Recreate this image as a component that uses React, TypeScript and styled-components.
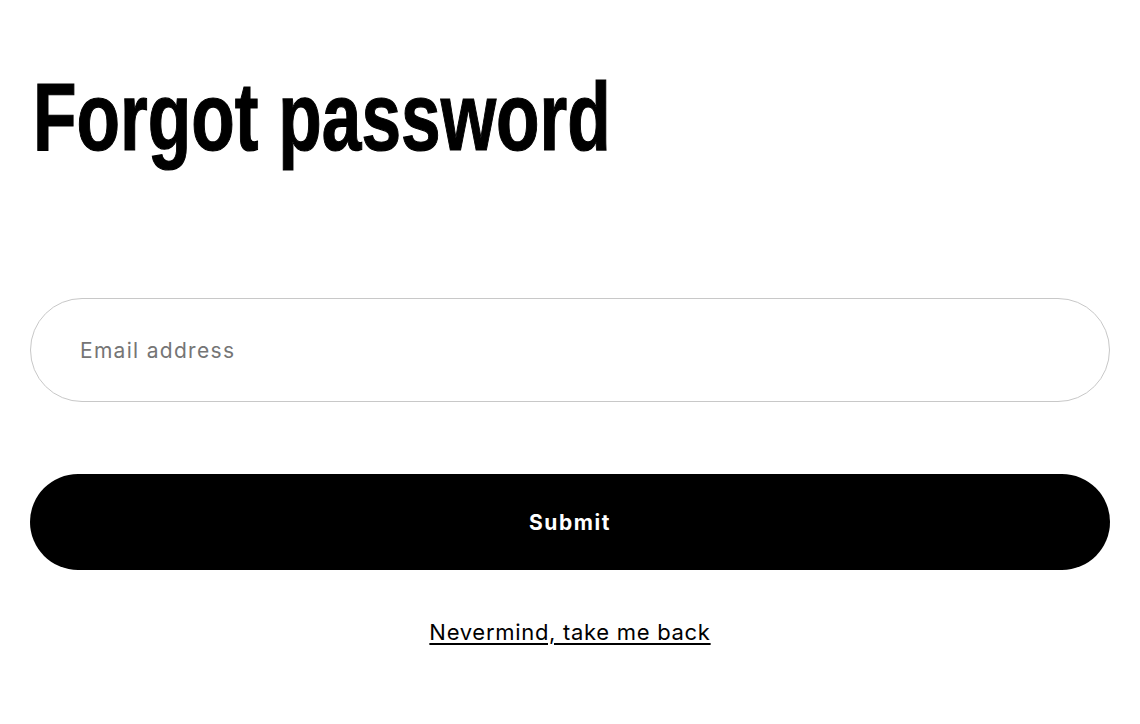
import React from "react";
import styled, { createGlobalStyle } from "styled-components";

const GlobalStyle = createGlobalStyle`
  html, body {
    margin: 0;
    padding: 0;
    background: #ffffff;
  }
  body {
    font-family: Inter, "Helvetica Neue", Arial, sans-serif;
    color: #111111;
  }
  * {
    box-sizing: border-box;
  }
`;

const Page = styled.div`
  width: 1140px;
  min-height: 724px;
  padding: 69px 30px 0 30px;
`;

const HeadingWrap = styled.div`
  height: 96px;
  overflow: visible;
  padding-left: 3px;
`;

const Heading = styled.h1`
  margin: 0;
  font-family: "Liberation Sans", Arial, sans-serif;
  font-weight: 700;
  font-size: 96px;
  line-height: 1;
  letter-spacing: 0;
  color: #000000;
  -webkit-text-stroke: 1.2px #000000;
  white-space: nowrap;
  display: inline-block;
  transform: scaleX(0.742);
  transform-origin: left top;
`;

const Form = styled.form`
  display: flex;
  flex-direction: column;
  margin-top: 133px;
`;

const EmailInput = styled.input`
  width: 100%;
  height: 104px;
  border: 1px solid #c8c8c8;
  border-radius: 52px;
  padding: 0 49px;
  font-family: Inter, "Helvetica Neue", Arial, sans-serif;
  font-size: 21px;
  letter-spacing: 1.3px;
  color: #111111;
  background: #ffffff;
  outline: none;

  &::placeholder {
    color: #757575;
  }
`;

const SubmitButton = styled.button`
  width: 100%;
  height: 96px;
  margin-top: 72px;
  border: none;
  border-radius: 48px;
  background: #000000;
  color: #ffffff;
  font-family: Inter, "Helvetica Neue", Arial, sans-serif;
  font-weight: 700;
  font-size: 21px;
  letter-spacing: 1.6px;
  cursor: pointer;
`;

const BackRow = styled.div`
  display: flex;
  justify-content: center;
  margin-top: 48px;
`;

const BackLink = styled.a`
  font-family: Inter, "Helvetica Neue", Arial, sans-serif;
  font-size: 22px;
  line-height: 28px;
  letter-spacing: 0.7px;
  color: #000000;
  text-decoration: underline;
  text-underline-offset: 3px;
  text-decoration-thickness: 2px;
  cursor: pointer;
`;

export default function App() {
  return (
    <>
      <GlobalStyle />
      <Page>
        <HeadingWrap>
          <Heading>Forgot password</Heading>
        </HeadingWrap>
        <Form onSubmit={(e) => e.preventDefault()}>
          <EmailInput type="email" placeholder="Email address" />
          <SubmitButton type="submit">Submit</SubmitButton>
          <BackRow>
            <BackLink>Nevermind, take me back</BackLink>
          </BackRow>
        </Form>
      </Page>
    </>
  );
}
